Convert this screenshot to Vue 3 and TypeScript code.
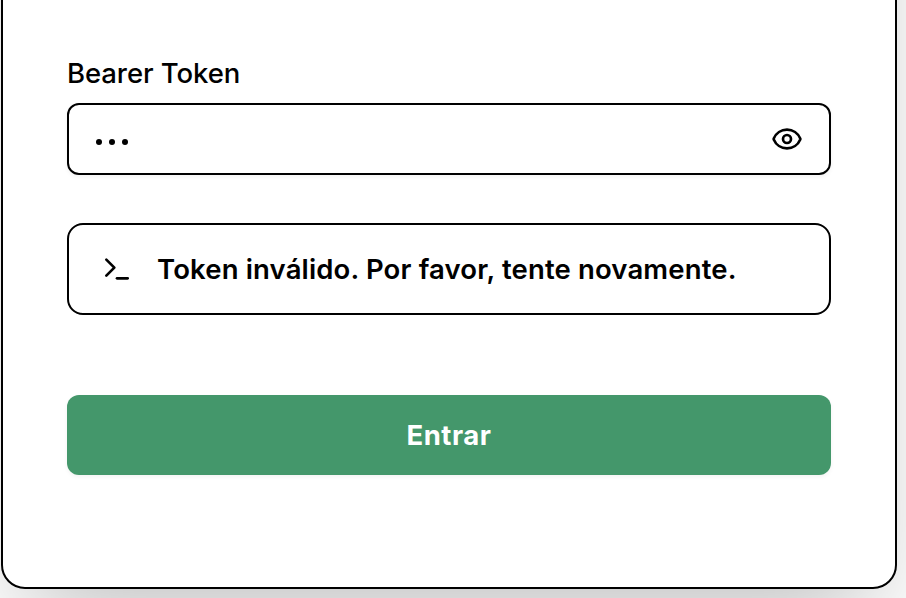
<script setup lang="ts">
import { ref } from 'vue'

const token = ref('abc')
const visible = ref(false)
const error = ref('Token inválido. Por favor, tente novamente.')
</script>

<template>
  <main class="page">
    <form class="card" @submit.prevent>
      <label class="label">Bearer Token</label>
      <div class="field">
        <span v-if="visible" class="value">{{ token }}</span>
        <span v-else class="mask">
          <i v-for="n in token.length" :key="n" class="dot"></i>
        </span>
        <button class="toggle" type="button" @click="visible = !visible">
          <svg class="icon" viewBox="0 0 24 24">
            <path d="M2.062 12.348a1 1 0 0 1 0-.696 10.75 10.75 0 0 1 19.876 0 1 1 0 0 1 0 .696 10.75 10.75 0 0 1-19.876 0" />
            <circle cx="12" cy="12" r="3" />
          </svg>
        </button>
      </div>
      <div class="alert" role="alert">
        <svg class="icon" viewBox="0 0 24 24">
          <polyline points="4 17 10 11 4 5" />
          <line x1="12" x2="20" y1="19" y2="19" />
        </svg>
        <span class="message">{{ error }}</span>
      </div>
      <button class="submit" type="submit">Entrar</button>
    </form>
  </main>
</template>

<style>
body {
  margin: 0;
  background: #fff;
}
</style>

<style scoped>
.page {
  display: flex;
  align-items: flex-end;
  box-sizing: border-box;
  height: 598px;
  padding: 0 9px 9px 1px;
  overflow: hidden;
  color: #000;
  font-family: Inter, 'Liberation Sans', sans-serif;
}
.card {
  display: flex;
  flex: none;
  flex-direction: column;
  justify-content: flex-end;
  box-sizing: border-box;
  width: 896px;
  height: 1000px;
  padding: 0 64px 112px;
  border: 2px solid #000;
  border-radius: 24px;
  background: #fff;
  box-shadow: 0 50px 100px -24px rgba(0, 0, 0, 0.25);
}
.label {
  height: 40px;
  margin-bottom: 10px;
  font-size: 27.5px;
  font-weight: 500;
  line-height: 40px;
  letter-spacing: -0.08px;
  white-space: nowrap;
}
.field {
  display: flex;
  align-items: center;
  justify-content: space-between;
  box-sizing: border-box;
  height: 72px;
  padding: 0 26px;
  border: 2px solid #000;
  border-radius: 12px;
  box-shadow: 0 2px 4px rgba(0, 0, 0, 0.05);
}
.value {
  font-size: 28px;
}
.mask {
  display: flex;
  gap: 7px;
  padding: 5px 0 0 1.3px;
}
.dot {
  width: 6px;
  height: 6px;
  border-radius: 50%;
  background: #000;
}
.toggle {
  display: flex;
  padding: 0;
  border: 0;
  background: none;
  color: inherit;
}
.icon {
  display: block;
  flex: none;
  width: 32px;
  height: 32px;
  fill: none;
  stroke: currentColor;
  stroke-width: 2;
  stroke-linecap: round;
  stroke-linejoin: round;
}
.alert {
  display: flex;
  align-items: center;
  box-sizing: border-box;
  height: 92px;
  margin-top: 48px;
  padding: 0 32px;
  border: 2px solid #000;
  border-radius: 16px;
}
.message {
  margin-left: 24px;
  font-size: 27.5px;
  font-weight: 600;
  line-height: 40px;
  letter-spacing: 0.15px;
  white-space: nowrap;
}
.submit {
  height: 80px;
  margin-top: 80px;
  padding: 0;
  border: 0;
  border-radius: 12px;
  background: #44976b;
  color: #fff;
  font: 700 27.5px/40px Inter, 'Liberation Sans', sans-serif;
  letter-spacing: 0.5px;
  box-shadow: 0 2px 4px rgba(0, 0, 0, 0.05);
}
</style>
